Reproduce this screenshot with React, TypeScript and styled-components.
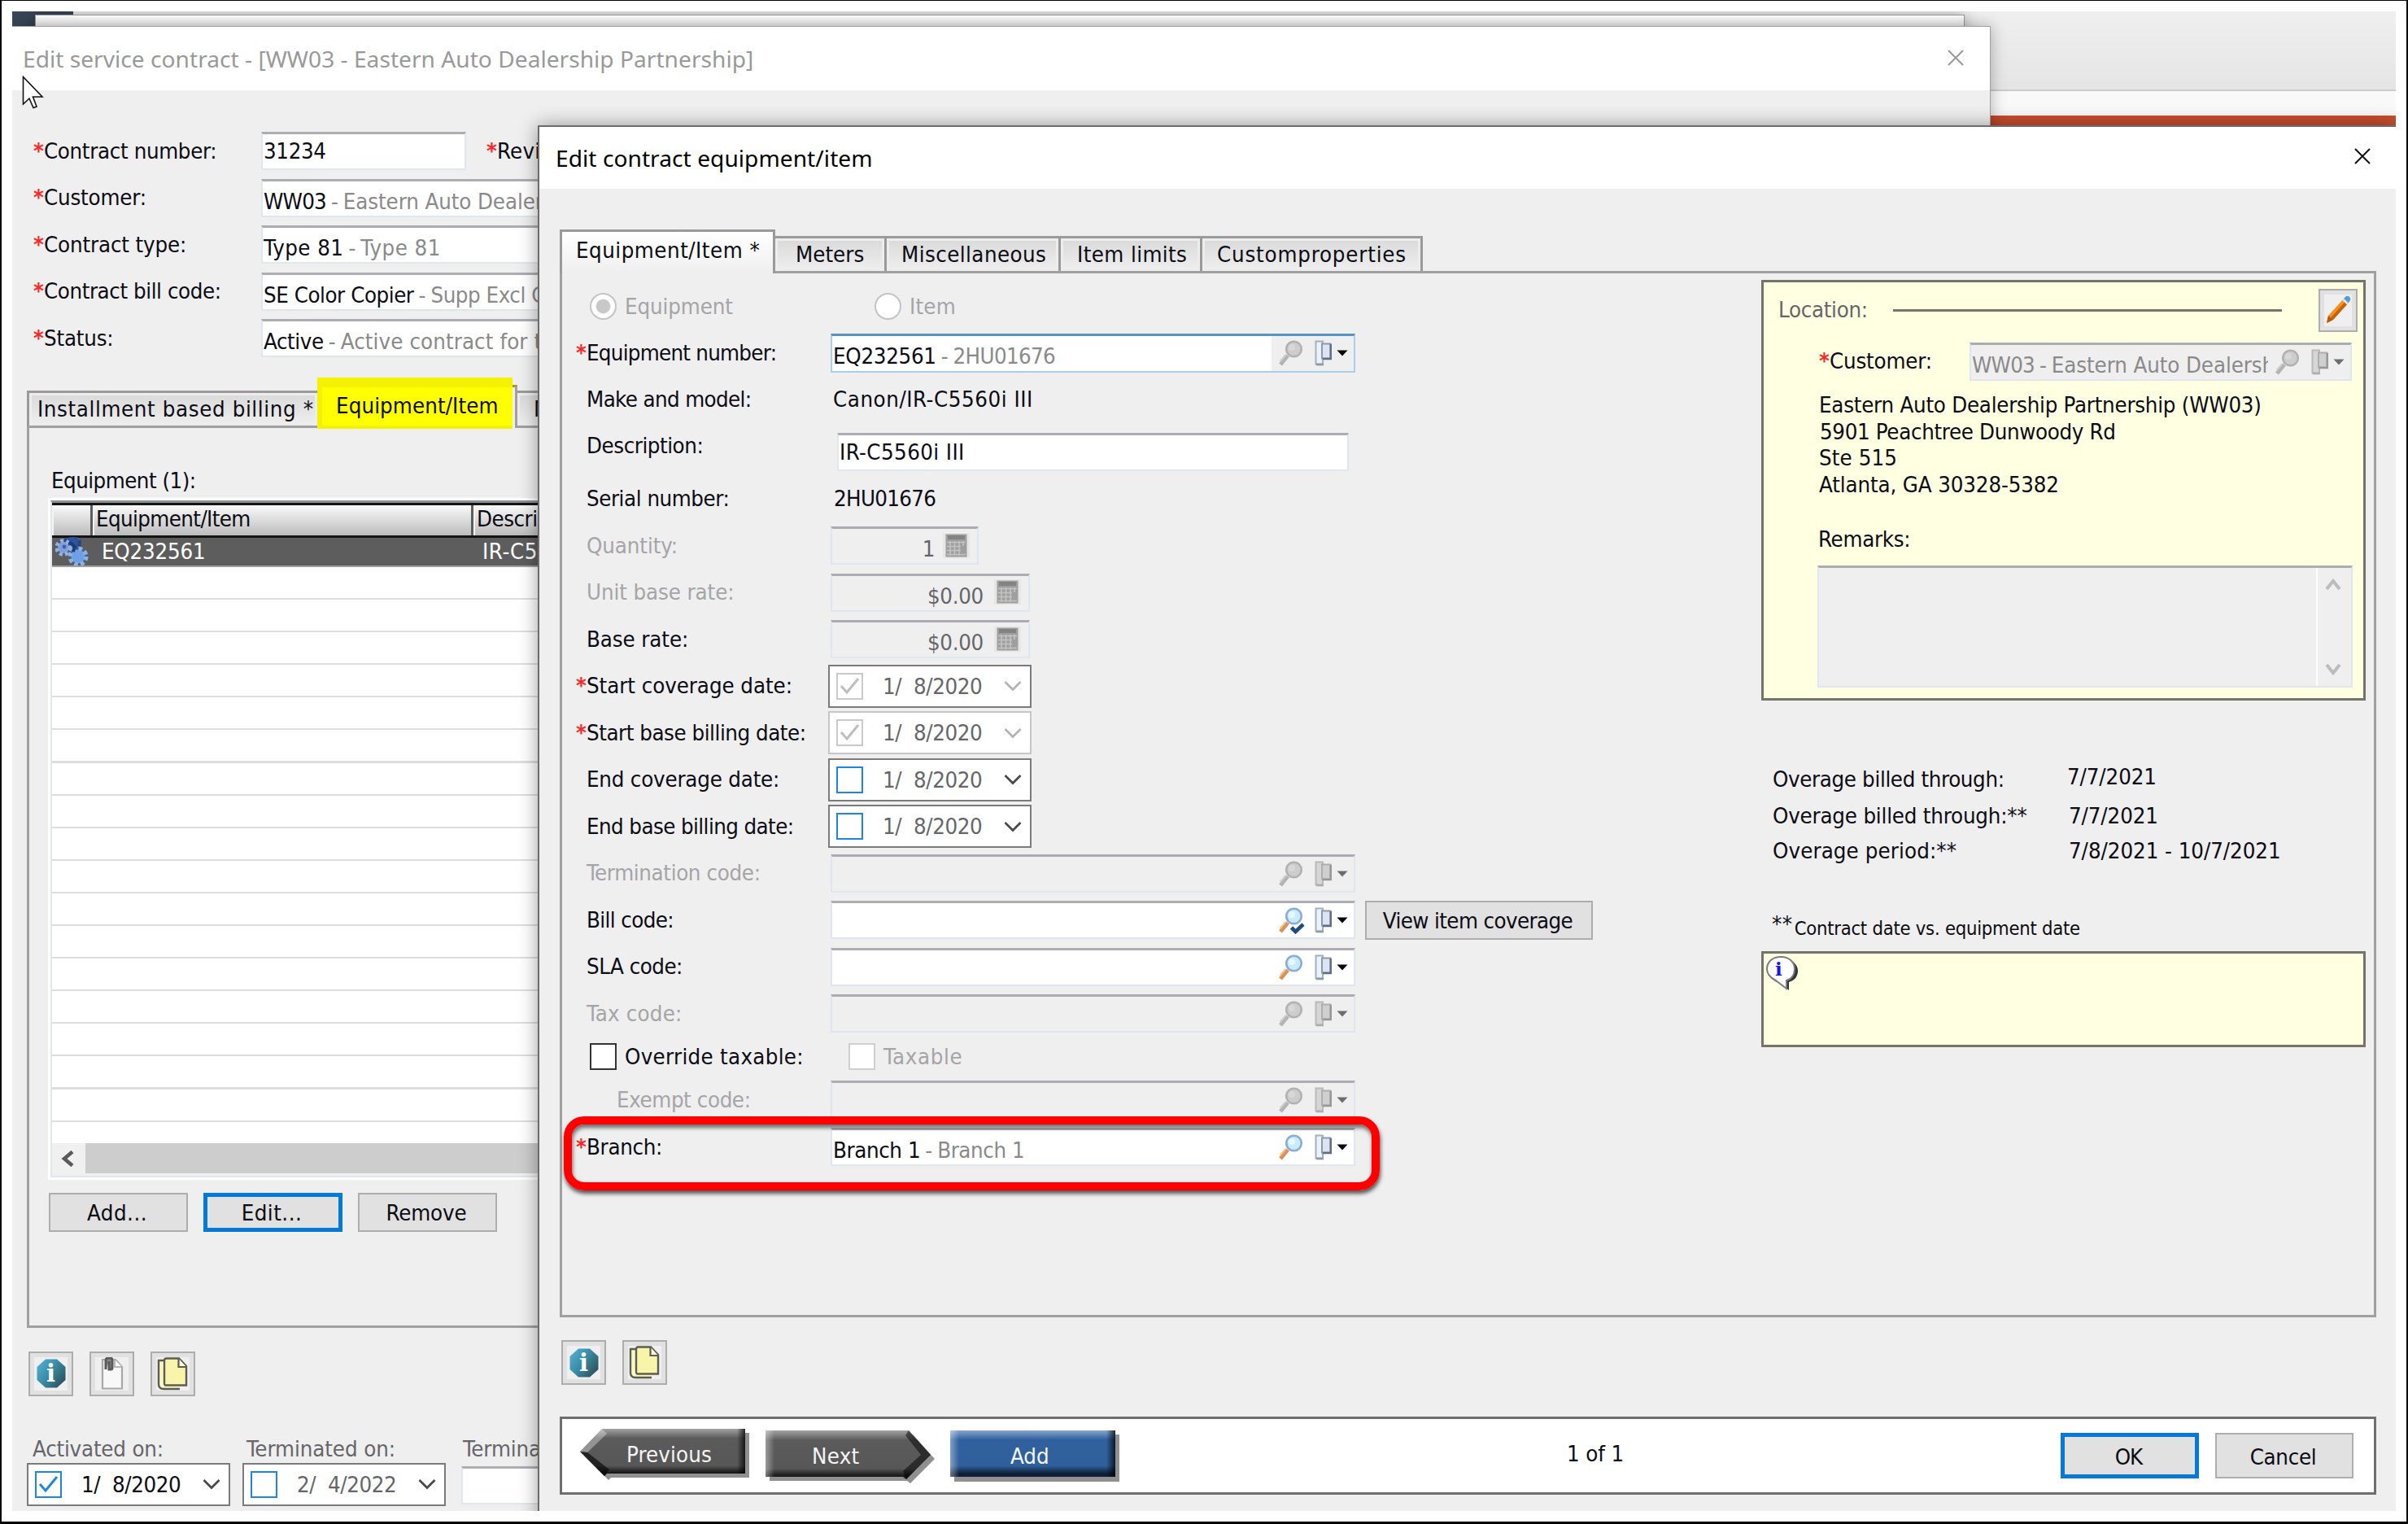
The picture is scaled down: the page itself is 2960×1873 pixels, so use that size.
import React from "react";
import styled, { createGlobalStyle, css } from "styled-components";

const UI = '"DejaVu Sans Condensed", "DejaVu Sans", sans-serif';
const TITLE = '"Noto Sans", "Open Sans", sans-serif';

const GlobalStyle = createGlobalStyle`
  * { box-sizing: border-box; }
  body { margin: 0; background: #fff; }
  button { margin: 0; padding: 0; border-radius: 0; font: inherit; color: inherit; }
  svg { display: block; flex: none; }
`;

/* ---------- desktop and windows ---------- */

const Page = styled.div`
  width: 2960px;
  height: 1873px;
  padding: 13px 13px 13px 13px;
  border: solid #000;
  border-width: 1px 2px 3px 2px;
  background: #fff;
  font-family: ${UI};
  font-size: 27.4px;
  line-height: 32px;
  color: #0c0c10;
  white-space: pre;
`;

const Desktop = styled.div`
  position: relative;
  width: 2930px;
  height: 1843px;
  overflow: hidden;
  background: #333;
`;

const AppRibbon = styled.div`
  height: 96px;
  background: linear-gradient(#efefef, #e5e5e5);
`;
const AppRule = styled.div`
  height: 32px;
  border-top: 2px solid #cbcbcb;
  background: #f9f9f9;
`;
const AppAccent = styled.div`
  height: 14px;
  background: #c94e2f;
`;
const NavyCorner = styled.div`
  position: absolute;
  left: 0;
  top: 0;
  width: 75px;
  height: 20px;
  background: #3a4659;
`;

const BackWindow = styled.section`
  position: absolute;
  left: 28px;
  top: 4px;
  width: 2372px;
  height: 60px;
  border: 1px solid #999;
  background: linear-gradient(#fff, #e4e4e4 16px);
  box-shadow: 0 0 16px rgba(0, 0, 0, 0.3);
`;

const ContractWindow = styled.section`
  position: absolute;
  left: 0;
  top: 18px;
  width: 2432px;
  height: 1900px;
  border: solid #a2a2a2;
  border-width: 1px 1px 0 0;
  background: #efefef;
  box-shadow: 0 0 18px rgba(0, 0, 0, 0.3);
`;

const ItemWindow = styled.section`
  position: absolute;
  left: 646px;
  top: 140px;
  width: 2284px;
  height: 1760px;
  border: solid #6d6b6b;
  border-width: 2px 0 0 2px;
  background: #efefef;
  box-shadow: 0 0 22px rgba(0, 0, 0, 0.38);
`;

const TitleBar = styled.header<{ $h: number; $active?: boolean }>`
  display: flex;
  align-items: center;
  justify-content: space-between;
  height: ${(p) => p.$h}px;
  background: #fff;
  font-family: ${TITLE};
  font-size: 28.1px;
`;

const ContractTitle = styled(TitleBar)`
  padding: 0 32px 0 13px;
  & > svg { margin-bottom: 2px; }
`;
const ItemTitle = styled(TitleBar)`
  padding: 0 31px 0 20px;
  & > svg { margin-bottom: 4px; }
`;
const TitleText = styled.h1<{ $active?: boolean }>`
  margin: 0;
  font: inherit;
  letter-spacing: ${(p) => (p.$active ? 0.06 : 0.03)}px;
  color: ${(p) => (p.$active ? "#000" : "#999")};
`;

const Cursor = styled.svg`
  position: absolute;
  left: 12px;
  top: 79px;
`;

/* ---------- text ---------- */

type Tone = "text" | "muted" | "disabled" | "soft";
const tones: Record<Tone, string> = {
  text: "#0c0c14",
  soft: "#66666a",
  muted: "#8a8a8a",
  disabled: "#a5a5a7",
};

const Txt = styled.span<{ $ls?: number; $tone?: Tone }>`
  letter-spacing: ${(p) => p.$ls ?? -0.3}px;
  color: ${(p) => tones[p.$tone ?? "text"]};
`;

const LabelBox = styled.label<{ $w: number; $indent?: number }>`
  display: flex;
  flex: none;
  width: ${(p) => p.$w}px;
  padding-left: ${(p) => p.$indent ?? 0}px;
`;
const Star = styled.span`
  width: 13px;
  flex: none;
  font-weight: bold;
  color: #fb2828;
`;

function Label({ t, w, ls, req, tone, indent }: {
  t: string; w: number; ls?: number; req?: boolean; tone?: Tone; indent?: number;
}) {
  return (
    <LabelBox $w={w} $indent={indent}>
      <Star>{req ? "*" : ""}</Star>
      <Txt $ls={ls} $tone={tone}>{t}</Txt>
    </LabelBox>
  );
}

/* ---------- controls ---------- */

const fieldFrame = css`
  border: 2px solid #dfe6f0;
  border-top: 3px solid #abadb3;
`;

const Field = styled.div<{ $w: number; $off?: boolean; $focus?: boolean; $dy?: number }>`
  display: flex;
  flex: none;
  align-items: center;
  justify-content: space-between;
  width: ${(p) => p.$w}px;
  height: 47px;
  margin-top: ${(p) => p.$dy ?? 0}px;
  overflow: hidden;
  ${fieldFrame}
  background: ${(p) => (p.$off ? "#efefef" : "#fff")};
  ${(p) => p.$focus && css`
    border: 2px solid #a9cfea;
    border-top: 3px solid #5794bf;
    height: 48px;
  `}
`;

const FieldText = styled.div<{ $drop?: number }>`
  display: flex;
  flex: 1;
  min-width: 0;
  overflow: hidden;
  margin-top: ${(p) => p.$drop ?? 8}px;
  padding-left: 1px;
`;
const Dash = styled.span`
  margin: 0 6px 0 6px;
  color: #8a8a8a;
`;

const LookupButtons = styled.div<{ $shade?: boolean }>`
  display: flex;
  flex: none;
  align-items: center;
  height: 100%;
  padding: 0 7px 0 9px;
  background: ${(p) => (p.$shade ? "#efefef" : "transparent")};
`;
const FolderSlot = styled.span`
  margin: 0 5px 0 12px;
`;

function Magnifier({ off, check }: { off?: boolean; check?: boolean }) {
  return (
    <svg width="32" height="34" viewBox="0 0 32 34">
      <path d="M2 31 L11 20" stroke={off ? "#b4b4b4" : "#d9935a"} strokeWidth="5" />
      <path d="M1.5 27 L8.5 19" stroke={off ? "#cfcfcf" : "#f3c38f"} strokeWidth="2" />
      <circle cx="18.5" cy="12" r="9.3" fill={off ? "#cdcdcd" : "#c9ecfb"} stroke={off ? "#b2b2b2" : "#8aa9dc"} strokeWidth="2.6" />
      <circle cx="16" cy="10" r="4" fill={off ? "#d8d8d8" : "#e6f8ff"} />
      {check && <path d="M15.5 26 L20.5 31 L30 22" fill="none" stroke="#1e4c7d" strokeWidth="4.6" />}
    </svg>
  );
}

function Door({ off }: { off?: boolean }) {
  const edge = off ? "#aeaeae" : "#8e9aa8";
  return (
    <svg width="22" height="32" viewBox="0 0 22 32">
      <path d="M1.5 1.5 H10 V29.5 H1.5 Z" fill={off ? "#d6d6d6" : "#eaf2fb"} stroke={off ? "#b9b9b9" : "#a3b0be"} strokeWidth="2" />
      <path d="M2 30 H11" stroke={edge} strokeWidth="2.6" />
      <path d="M9 4.5 H19.5 V22.5 H9 Z" fill={off ? "#cfcfcf" : "#dbe3f4"} stroke={edge} strokeWidth="2" />
      <path d="M19.8 5 V23 H10" fill="none" stroke={off ? "#989898" : "#5f6f82"} strokeWidth="2.4" />
    </svg>
  );
}

function Caret({ off }: { off?: boolean }) {
  return (
    <svg width="14" height="8" viewBox="0 0 14 8">
      <path d="M0.5 0.5 H13.5 L7 7.5 Z" fill={off ? "#6d6d6d" : "#050505"} />
    </svg>
  );
}

function Lookup({ w, main, desc, off, focus, check, ls, dls, magOff, mainTone }: {
  w: number; main?: string; desc?: string; off?: boolean; focus?: boolean; check?: boolean;
  ls?: number; dls?: number; magOff?: boolean; mainTone?: Tone;
}) {
  return (
    <Field $w={w} $off={off} $focus={focus}>
      <FieldText>
        {main && <Txt $ls={ls} $tone={mainTone}>{main}</Txt>}
        {desc && <><Dash>-</Dash><Txt $ls={dls ?? ls} $tone="muted">{desc}</Txt></>}
      </FieldText>
      <LookupButtons $shade={focus}>
        <Magnifier off={off || magOff} check={check} />
        <FolderSlot><Door off={off} /></FolderSlot>
        <Caret off={off} />
      </LookupButtons>
    </Field>
  );
}

const AmountText = styled(FieldText)<{ $gap: number }>`
  justify-content: flex-end;
  padding-right: ${(p) => p.$gap}px;
`;
const CalcSlot = styled.span`
  margin: -2px 9px 0 0;
  padding: 1px 3px;
  background: #e6e6e6;
`;
function Calculator() {
  return (
    <svg width="27" height="29" viewBox="0 0 27 29">
      <rect x="0.5" y="0.5" width="26" height="28" fill="#9f9f9f" />
      <rect x="3" y="2" width="21" height="5" fill="#838383" />
      <path d="M2 10.5H25M2 15.5H19M2 20.5H19M2 25.5H25M6 9V27M11.5 9V27M17 9V27M22 9V15" stroke="#c3c3c3" strokeWidth="1.6" />
    </svg>
  );
}
function Amount({ w, t, gap = 13 }: { w: number; t: string; gap?: number }) {
  return (
    <Field $w={w} $off>
      <AmountText $gap={gap}><Txt $tone="soft">{t}</Txt></AmountText>
      <CalcSlot><Calculator /></CalcSlot>
    </Field>
  );
}

const Check = styled.span<{ $edge: string }>`
  display: block;
  flex: none;
  width: 33px;
  height: 33px;
  border: 2.6px solid ${(p) => p.$edge};
  background: #fff;
`;

const DateFrame = styled.div<{ $dim?: boolean }>`
  display: flex;
  flex: none;
  align-items: center;
  width: 250px;
  height: 53px;
  padding: 0 10px 0 8px;
  border: 2.5px solid ${(p) => (p.$dim ? "#c6c6c6" : "#7b7b7b")};
  background: #fff;
`;
const DateText = styled.div`
  flex: 1;
  padding: 1px 0 0 24px;
`;

function DateBox({ t, on, off, dim, tone, arrow }: {
  t: [string, string]; on?: boolean; off?: boolean; dim?: boolean; tone?: Tone; arrow?: string;
}) {
  return (
    <DateFrame $dim={dim}>
      <Check $edge={off ? "#c9c9c9" : "#1f86dd"}>
        {on && (
          <svg width="28" height="28" viewBox="0 0 28 28">
            <path d="M4 14 L11 22 L25 5" fill="none" stroke={off ? "#bdbdbd" : "#1f86dd"} strokeWidth="3" />
          </svg>
        )}
      </Check>
      <DateText><Txt $ls={-0.4} $tone={tone ?? "soft"}>{t[0] + "  " + t[1]}</Txt></DateText>
      <svg width="22" height="14" viewBox="0 0 22 14">
        <path d="M1.5 2 L11 11.5 L20.5 2" fill="none" stroke={arrow ?? "#4a4a4a"} strokeWidth="2.8" />
      </svg>
    </DateFrame>
  );
}

const PushButton = styled.button<{ $w: number; $h: number; $primary?: boolean }>`
  flex: none;
  width: ${(p) => p.$w}px;
  height: ${(p) => p.$h}px;
  padding: 3px 3px 0 0;
  border: ${(p) => (p.$primary ? "5px solid #0479d9" : "2px solid #adadad")};
  background: #e1e1e1;
`;

const IconButton = styled.button<{ $w?: number; $h?: number }>`
  display: flex;
  flex: none;
  align-items: center;
  justify-content: center;
  width: ${(p) => p.$w ?? 55}px;
  height: ${(p) => p.$h ?? 55}px;
  border: 2px solid #adadad;
  background: #efefef;
  box-shadow: inset 0 0 0 5px #e1e1e1;
`;

const InfoGlyph = styled.span`
  display: grid;
  place-items: center;
  & > * { grid-area: 1 / 1; }
`;
const InfoLetter = styled.b`
  position: relative;
  font: bold 29px/36px "DejaVu Serif", serif;
  color: #fff;
`;
function InfoIcon() {
  return (
    <InfoGlyph>
      <svg width="36" height="36" viewBox="0 0 36 36">
        <defs>
          <linearGradient id="teal" x1="0" y1="0" x2="1" y2="0.7">
            <stop offset="0" stopColor="#56b4d6" />
            <stop offset="0.5" stopColor="#3a8ea8" />
            <stop offset="1" stopColor="#2f5560" />
          </linearGradient>
        </defs>
        <path d="M11 0.5 H25 L35.5 10 V26 L25 35.5 H11 L0.5 26 V10 Z" fill="url(#teal)" />
      </svg>
      <InfoLetter>i</InfoLetter>
    </InfoGlyph>
  );
}
function NotesIcon() {
  return (
    <svg width="39" height="41" viewBox="0 0 39 41">
      <path d="M8 4 H2 V33 Q2 39 8 39 H28" fill="#fbf8c8" stroke="#5c5c50" strokeWidth="2.4" />
      <path d="M11 1.5 H27 L36 11 V34.500 H10 Q9 34 9 32 V4 Q9 2 11 1.500 Z" fill="#f8f5ab" stroke="#5c5c50" strokeWidth="2.4" />
      <path d="M26.500 1.500 V12 H36" fill="#fdfce0" stroke="#5c5c50" strokeWidth="2.2" />
    </svg>
  );
}
function ClipIcon() {
  return (
    <svg width="28" height="40" viewBox="0 0 28 40">
      <path d="M2 3 H18 L26 12 V38.500 H2 Z" fill="#f8f8f8" stroke="#a8a8a8" strokeWidth="2.2" />
      <path d="M17 3 V12 H26" fill="#fff" stroke="#b5b5b5" strokeWidth="2" />
      <path d="M6 15 V4 Q6 1 9 1 H12 Q14 1 14 4 V13 Q14 15 12 15 H10 V5" fill="#8a8a8a" stroke="#5b5b5b" strokeWidth="3" />
    </svg>
  );
}
function PencilIcon() {
  return (
    <svg width="32" height="36" viewBox="0 0 32 36">
      <path d="M2 34 L4 25 L23 4 L29 9 L10 30 Z" fill="#f2921d" />
      <path d="M10 30 L29 9 L26 6.500 L7 27.500 Z" fill="#c4640c" />
      <path d="M2 34 L4 25 L10 30 Z" fill="#b4580a" />
      <path d="M23 4 L26 1 Q29 0 31 3 Q32 5 29 9 Z" fill="#4f9ed8" />
      <path d="M22 5 L28 10.500" stroke="#dfe7ee" strokeWidth="2.6" />
    </svg>
  );
}
function GearsIcon() {
  return (
    <svg width="41" height="35" viewBox="0 0 41 35">
      <circle cx="21" cy="7.500" r="8" fill="#2f549c" />
      <circle cx="21" cy="7.500" r="9" fill="none" stroke="#24468c" strokeWidth="4" strokeDasharray="4 3.500" />
      <circle cx="10" cy="13" r="7" fill="#7f9fd8" />
      <circle cx="10" cy="13" r="8.500" fill="none" stroke="#93b2e6" strokeWidth="4.500" strokeDasharray="4 3.200" />
      <circle cx="28" cy="24" r="8.500" fill="#6fa0e6" />
      <circle cx="28" cy="24" r="10" fill="none" stroke="#86b2f0" strokeWidth="5" strokeDasharray="4.600 3.300" />
      <path d="M17 6 L24 12 L22 18" fill="none" stroke="#1f3b78" strokeWidth="4" />
      <circle cx="11" cy="12" r="2.400" fill="#3d62ad" />
    </svg>
  );
}
function CloseIcon({ color }: { color: string }) {
  return (
    <svg width="20" height="20" viewBox="0 0 20 20">
      <path d="M1 1 L19 19 M19 1 L1 19" stroke={color} strokeWidth="2" />
    </svg>
  );
}

/* ---------- tabs ---------- */

const TabStrip = styled.nav<{ $h: number }>`
  display: flex;
  align-items: flex-end;
  height: ${(p) => p.$h}px;
`;
const Tab = styled.div<{ $w: number; $pad: number; $active?: boolean }>`
  position: relative;
  flex: none;
  width: ${(p) => p.$w}px;
  height: ${(p) => (p.$active ? "calc(100% + 3px)" : "43px")};
  margin-bottom: ${(p) => (p.$active ? -3 : 0)}px;
  z-index: ${(p) => (p.$active ? 1 : 0)};
  padding: ${(p) => (p.$active ? 7 : 4)}px 0 0 ${(p) => p.$pad}px;
  border: solid #9a9a9a;
  border-width: 3px 3px 0 ${(p) => (p.$active ? 3 : 0)}px;
  background: ${(p) => (p.$active ? "linear-gradient(#fff, #efefef)" : "linear-gradient(#d9d9d9, #efefef)")};
  box-shadow: ${(p) => (p.$active ? "none" : "inset 0 0 0 3px #ededed")};
`;
const FirstTab = styled(Tab)`
  border-left-width: 3px;
`;
const MarkedTab = styled(Tab)`
  height: 53px;
  background: linear-gradient(to right, #ff0 calc(100% - 4px), #efefef 0);
  border-color: #a0a000;
  border-right-color: #a0a0a0;
  box-shadow: none;
  &::before {
    content: "";
    position: absolute;
    left: -6px;
    right: 3px;
    top: -12px;
    height: 63px;
    z-index: -1;
    background: #f4f200;
  }
`;
const MarkFill = styled.div`
  position: absolute;
  inset: 0 3px 3px 0;
  z-index: -1;
  background: #ff0;
`;

/* ---------- contract window ---------- */

const ContractForm = styled.div`
  display: flex;
  flex-direction: column;
  width: 646px;
  padding: 46px 0 0 26px;
  overflow: hidden;
`;
const FormRow = styled.div<{ $h?: number; $gap?: number }>`
  display: flex;
  align-items: center;
  height: ${(p) => p.$h ?? 57.5}px;
  margin-top: ${(p) => p.$gap ?? 0}px;
`;
const ContractTabs = styled.div`
  margin: 28px 20px 0 18px;
`;
const ContractPanel = styled.div`
  height: 1109px;
  padding: 49px 0 0 23px;
  border: 3px solid #a0a0a0;
`;
const ListTitle = styled.div`
  padding-left: 4px;
  height: 37px;
`;
const Grid = styled.div`
  width: 2200px;
  height: 838px;
  border: 3px solid #fff;
`;
const GridInner = styled.div`
  display: flex;
  flex-direction: column;
  height: 832px;
  border: 2px solid #dfe6f0;
  border-top: 3px solid #8c8f96;
  background: #fff;
`;
const HeaderRow = styled.div`
  display: flex;
  flex: none;
  height: 43px;
  border: solid #141414;
  border-width: 3px 0;
  background: linear-gradient(#fafafa, #bcbcbc);
`;
const HeaderCell = styled.div<{ $w: number }>`
  width: ${(p) => p.$w}px;
  padding: 1px 0 0 4px;
  border-right: 3px solid #5e5e5e;
  box-shadow: inset 2px 0 0 #f4f4f4;
`;
const SelectedRow = styled.div`
  display: flex;
  flex: none;
  align-items: center;
  height: 36px;
  padding-left: 4px;
  border-bottom: 2px solid #a0a0a0;
  background: #5d5d5d;
`;
const RowCell = styled.div<{ $w: number; $pad: number; $ls?: number }>`
  width: ${(p) => p.$w}px;
  padding-left: ${(p) => p.$pad}px;
  letter-spacing: ${(p) => p.$ls ?? -0.2}px;
  color: #fff;
`;
const GridLines = styled.div`
  flex: 1;
  background: repeating-linear-gradient(#fff 0 38px, #dedede 38px 40.1px);
`;
const ScrollBar = styled.div`
  display: flex;
  align-items: flex-start;
  flex: none;
  height: 40px;
  background: #f0f0f0;
`;
const ScrollThumb = styled.div`
  flex: 1;
  height: 37px;
  margin-left: 14px;
  background: #cdcdcd;
`;
const ArrowSlot = styled.span`
  margin: 9px 0 0 11px;
`;
const ListButtons = styled.div`
  display: flex;
  gap: 19px;
  padding: 16px 0 0 1px;
`;
const IconRow = styled.div<{ $top: number; $left: number; $gap: number }>`
  display: flex;
  gap: ${(p) => p.$gap}px;
  padding: ${(p) => p.$top}px 0 0 ${(p) => p.$left}px;
`;
const ContractFooter = styled.div`
  display: flex;
  padding: 49px 0 0 18px;
`;
const FooterItem = styled.div<{ $w: number; $pad: number }>`
  display: flex;
  flex-direction: column;
  flex: none;
  width: ${(p) => p.$w}px;
  & > span { padding-left: ${(p) => p.$pad}px; height: 33px; }
`;
const PlainField = styled(Field)`
  margin-top: 4px;
`;

/* ---------- item window ---------- */

const ItemTabs = styled.div`
  margin: 50px 24px 0 25px;
`;
const ItemPanel = styled.div`
  display: flex;
  align-items: flex-start;
  height: 1286px;
  padding: 8px 10px 0 17px;
  border: 3px solid #a0a0a0;
`;
const ItemForm = styled.div`
  flex: 1;
  min-width: 0;
  padding-top: 4px;
`;
const Radio = styled.span<{ $on?: boolean }>`
  flex: none;
  width: 33px;
  height: 33px;
  border: 2.5px solid #c4c4c4;
  border-radius: 50%;
  background: ${(p) => (p.$on ? "radial-gradient(#c8c8c8 0 8px, #fff 9.5px)" : "#fff")};
`;
const RadioGroup = styled.div<{ $w: number }>`
  display: flex;
  align-items: center;
  gap: 10px;
  width: ${(p) => p.$w}px;
`;
const RadioRow = styled(FormRow)`
  padding-left: 17px;
`;
const CoverageSlot = styled.div`
  margin-left: 12px;
`;
const CheckGroup = styled.div<{ $w: number; $gap: number }>`
  display: flex;
  align-items: center;
  gap: ${(p) => p.$gap}px;
  width: ${(p) => p.$w}px;
`;
const BranchMark = styled.div`
  position: absolute;
  left: 30px;
  top: 1216px;
  width: 1003px;
  height: 91px;
  border: 10px solid #f00;
  border-radius: 25px;
  box-shadow: 1px 4px 5px rgba(0, 0, 0, 0.65), inset 1px 4px 5px rgba(0, 0, 0, 0.55);
`;

const SideColumn = styled.div`
  flex: none;
  width: 743px;
`;
const NoteBox = styled.div<{ $h: number }>`
  height: ${(p) => p.$h}px;
  border: 3px solid #74746a;
  background: #ffffe1;
`;
const LocationHead = styled.div`
  display: flex;
  align-items: center;
  height: 70px;
  padding: 0 7px 2px 18px;
`;
const LocationRule = styled.div`
  flex: 1;
  height: 3px;
  margin: 0 45px 0 31px;
  background: #75756c;
`;
const LocationBody = styled.div`
  padding-left: 66px;
`;
const AddressLine = styled.div<{ $gap?: number; $pad?: number }>`
  height: 32.5px;
  margin-top: ${(p) => p.$gap ?? 0}px;
  padding-left: ${(p) => p.$pad ?? 2}px;
`;
const Remarks = styled.div`
  display: flex;
  justify-content: flex-end;
  width: 658px;
  height: 150px;
  margin-top: 15px;
  ${fieldFrame}
  background: #efefef;
`;
const RemarksScroll = styled.div`
  display: flex;
  flex-direction: column;
  justify-content: space-between;
  width: 43px;
  padding: 13px 0 13px 9px;
  border-left: 2.500px solid #fdfdfd;
`;
const OverageRow = styled.div<{ $h: number }>`
  display: flex;
  align-items: center;
  height: ${(p) => p.$h}px;
  padding-left: 14px;
`;
const OverageLabel = styled.div`
  width: 362px;
`;
const OverageValue = styled.div<{ $up?: number; $in?: number }>`
  margin: ${(p) => -(p.$up ?? 0)}px 0 0 ${(p) => p.$in ?? 2}px;
`;
const Overage = styled.div`
  padding-top: 74px;
`;
const Footnote = styled.div`
  display: flex;
  height: 49px;
  margin: 54px 0 0 13px;
`;
const FootnoteText = styled.span`
  margin-left: 2px;
  padding-top: 5px;
  font-size: 23.6px;
  letter-spacing: -0.25px;
`;
const Bubble = styled.div`
  display: grid;
  width: 42px;
  margin: 3px 0 0 2px;
  & > * { grid-area: 1 / 1; }
`;
const BubbleLetter = styled.b`
  position: relative;
  padding-left: 12px;
  font: bold 23px/31px "DejaVu Serif", serif;
  color: #1414f0;
`;

const NavBar = styled.footer`
  display: flex;
  align-items: flex-start;
  height: 96px;
  margin: 39px 24px 0 25px;
  padding-left: 22px;
  border: 3px solid #6f6f6f;
  background: #fff;
`;
const ShapeButton = styled.button<{ $left?: number; $top: number; $tx: number }>`
  display: grid;
  flex: none;
  width: 208px;
  height: 64px;
  margin: ${(p) => p.$top}px 0 0 ${(p) => p.$left ?? 0}px;
  border: 0;
  background: none;
  text-align: left;
  & > * { grid-area: 1 / 1; }
  & > span {
    position: relative;
    padding: 16px 0 0 ${(p) => p.$tx}px;
    color: #f4f4f4;
  }
`;
const Counter = styled.div`
  flex: 1;
  padding: 27px 0 0 550px;
`;
const EndButtons = styled.div`
  display: flex;
  gap: 20px;
  margin: 17px 25px 0 0;
`;

function BevelDefs() {
  return (
    <defs>
      <linearGradient id="grey" x1="0" y1="0" x2="0" y2="1">
        <stop offset="0" stopColor="#a2a2a2" />
        <stop offset="0.2" stopColor="#5b5b5b" />
        <stop offset="0.78" stopColor="#575757" />
        <stop offset="0.92" stopColor="#1c1c1c" />
        <stop offset="1" stopColor="#141414" />
      </linearGradient>
      <linearGradient id="blue" x1="0" y1="0" x2="0" y2="1">
        <stop offset="0" stopColor="#86a6cd" />
        <stop offset="0.2" stopColor="#30619e" />
        <stop offset="0.76" stopColor="#30609b" />
        <stop offset="0.93" stopColor="#0e1f38" />
        <stop offset="1" stopColor="#0e1f38" />
      </linearGradient>
      <linearGradient id="lit" x1="0" y1="0" x2="1" y2="0">
        <stop offset="0" stopColor="#fff" stopOpacity="0.4" />
        <stop offset="1" stopColor="#fff" stopOpacity="0" />
      </linearGradient>
      <linearGradient id="shade" x1="0" y1="0" x2="1" y2="0">
        <stop offset="0" stopColor="#000" stopOpacity="0" />
        <stop offset="1" stopColor="#000" stopOpacity="0.75" />
      </linearGradient>
    </defs>
  );
}
function PreviousShape() {
  const d = "M0 28 L27 0 H203 V55 H33 L30 58 Z";
  return (
    <svg width="208" height="64" viewBox="0 0 208 64">
      <BevelDefs />
      <path d={d} transform="translate(5 5)" fill="#909090" />
      <path d={d} fill="url(#grey)" />
      <path d="M0 28 L27 0 L33 6 L9 29 Z" fill="#fff" opacity="0.35" />
      <path d="M0 28 L9 29 L36 50 L30 58 Z" fill="#000" opacity="0.6" />
      <rect x="193" width="10" height="55" fill="url(#shade)" />
    </svg>
  );
}
function NextShape() {
  const d = "M0 0 H176 L203 30 L173 60 L169 57 H0 Z";
  return (
    <svg width="208" height="66" viewBox="0 0 208 66">
      <path d={d} transform="translate(5 5)" fill="#909090" />
      <path d={d} fill="url(#grey)" />
      <rect width="11" height="57" fill="url(#lit)" />
      <path d="M176 0 L203 30 L173 60 L169 50 L191 30 L172 6 Z" fill="#000" opacity="0.5" />
    </svg>
  );
}
function AddShape() {
  return (
    <svg width="208" height="64" viewBox="0 0 208 64">
      <rect x="5" y="5" width="203" height="58" fill="#909090" />
      <rect width="203" height="57" fill="url(#blue)" />
      <rect width="11" height="57" fill="url(#lit)" />
      <rect x="192" width="11" height="57" fill="url(#shade)" />
    </svg>
  );
}

function ContractPane() {
  return (
    <ContractWindow>
      <ContractTitle $h={78}>
        <TitleText>Edit service contract - [WW03 - Eastern Auto Dealership Partnership]</TitleText>
        <CloseIcon color="#999" />
      </ContractTitle>
      <ContractForm>
        <FormRow>
          <Label w={280} req t="Contract number:" ls={-0.35} />
          <Field $w={252}><FieldText $drop={0}><Txt $ls={-0.34}>31234</Txt></FieldText></Field>
          <LabelBox $w={200} $indent={25}><Star>*</Star><Txt $ls={0.2}>Revi</Txt></LabelBox>
        </FormRow>
        <FormRow>
          <Label w={280} req t="Customer:" ls={-0.19} />
          <Lookup w={900} main="WW03" ls={-0.8} desc="Eastern Auto Dealer" dls={-0.1} />
        </FormRow>
        <FormRow>
          <Label w={280} req t="Contract type:" ls={-0.15} />
          <Lookup w={900} main="Type 81" desc="Type 81" ls={0.44} />
        </FormRow>
        <FormRow>
          <Label w={280} req t="Contract bill code:" ls={-0.42} />
          <Lookup w={900} main="SE Color Copier" desc="Supp Excl C" ls={-0.45} />
        </FormRow>
        <FormRow>
          <Label w={280} req t="Status:" ls={-0.2} />
          <Lookup w={900} main="Active" desc="Active contract for t" ls={-0.4} dls={0.1} />
        </FormRow>
      </ContractForm>
      <ContractTabs>
        <TabStrip $h={50}>
          <FirstTab $w={360} $pad={10}><Txt $ls={0.61}>Installment based billing *</Txt></FirstTab>
          <MarkedTab $w={243} $pad={17} $active><MarkFill /><Txt $ls={0.1}>Equipment/Item</Txt></MarkedTab>
          <Tab $w={150} $pad={20}><Txt>M</Txt></Tab>
        </TabStrip>
        <ContractPanel>
          <ListTitle><Txt $ls={-0.52}>Equipment (1):</Txt></ListTitle>
          <Grid>
            <GridInner>
              <HeaderRow>
                <HeaderCell $w={50} />
                <HeaderCell $w={468}><Txt $ls={-0.6}>Equipment/Item</Txt></HeaderCell>
                <HeaderCell $w={600}><Txt $ls={-0.5}>Descrip</Txt></HeaderCell>
              </HeaderRow>
              <SelectedRow>
                <GearsIcon />
                <RowCell $w={467} $pad={16}>EQ232561</RowCell>
                <RowCell $w={400} $pad={17} $ls={0.6}>IR-C5</RowCell>
              </SelectedRow>
              <GridLines />
              <ScrollBar>
                <ArrowSlot>
                  <svg width="16" height="20" viewBox="0 0 16 20">
                    <path d="M14 1.500 L4 10 L14 18.500" fill="none" stroke="#5a5a5a" strokeWidth="4.500" />
                  </svg>
                </ArrowSlot>
                <ScrollThumb />
              </ScrollBar>
            </GridInner>
          </Grid>
          <ListButtons>
            <PushButton $w={171} $h={48}><Txt $ls={0.5}>Add...</Txt></PushButton>
            <PushButton $w={171} $h={48} $primary><Txt $ls={0.5}>Edit...</Txt></PushButton>
            <PushButton $w={171} $h={48}><Txt $ls={-0.18}>Remove</Txt></PushButton>
          </ListButtons>
        </ContractPanel>
      </ContractTabs>
      <IconRow $top={29} $left={20} $gap={20}>
        <IconButton><InfoIcon /></IconButton>
        <IconButton><ClipIcon /></IconButton>
        <IconButton><NotesIcon /></IconButton>
      </IconRow>
      <ContractFooter>
        <FooterItem $w={265} $pad={7}>
          <Txt $ls={-0.2} $tone="soft">Activated on:</Txt>
          <DateBox t={["1/", "8/2020"]} on tone="text" />
        </FooterItem>
        <FooterItem $w={269} $pad={5}>
          <Txt $ls={-0.08} $tone="soft">Terminated on:</Txt>
          <DateBox t={["2/", "4/2022"]} />
        </FooterItem>
        <FooterItem $w={300} $pad={2}>
          <Txt $ls={-0.1} $tone="soft">Termina</Txt>
          <PlainField $w={300} />
        </FooterItem>
      </ContractFooter>
    </ContractWindow>
  );
}

const L = 313;

function ItemFormRows() {
  return (
    <ItemForm>
      <RadioRow $h={57}>
        <RadioGroup $w={350}><Radio $on /><Txt $tone="disabled" $ls={-0.1}>Equipment</Txt></RadioGroup>
        <RadioGroup $w={200}><Radio /><Txt $tone="disabled" $ls={0.2}>Item</Txt></RadioGroup>
      </RadioRow>
      <FormRow $h={57}>
        <Label w={L} req t="Equipment number:" ls={-0.73} />
        <Lookup w={645} main="EQ232561" desc="2HU01676" ls={-0.29} dls={-0.66} focus magOff />
      </FormRow>
      <FormRow $h={57.5}>
        <Label w={L + 3} t="Make and model:" ls={-0.63} />
        <Txt $ls={0.55}>Canon/IR-C5560i III</Txt>
      </FormRow>
      <FormRow $h={57}>
        <Label w={L + 8} t="Description:" ls={-0.45} />
        <Field $w={629} $dy={14}><FieldText $drop={0}><Txt $ls={0.4}>IR-C5560i III</Txt></FieldText></Field>
      </FormRow>
      <FormRow $gap={8}>
        <Label w={L + 4} t="Serial number:" ls={-0.45} />
        <Txt $ls={-0.66}>2HU01676</Txt>
      </FormRow>
      <FormRow>
        <Label w={L} t="Quantity:" ls={-0.1} tone="disabled" />
        <Amount w={182} t="1" gap={10} />
      </FormRow>
      <FormRow>
        <Label w={L} t="Unit base rate:" ls={-0.1} tone="disabled" />
        <Amount w={245} t="$0.00" />
      </FormRow>
      <FormRow>
        <Label w={L} t="Base rate:" ls={-0.1} />
        <Amount w={245} t="$0.00" />
      </FormRow>
      <FormRow>
        <Label w={L - 3} req t="Start coverage date:" ls={-0.06} />
        <DateBox t={["1/", "8/2020"]} on off arrow="#b4b4b4" />
      </FormRow>
      <FormRow>
        <Label w={L - 3} req t="Start base billing date:" ls={-0.46} />
        <DateBox t={["1/", "8/2020"]} on off dim arrow="#b4b4b4" />
      </FormRow>
      <FormRow>
        <Label w={L - 3} t="End coverage date:" ls={-0.2} />
        <DateBox t={["1/", "8/2020"]} />
      </FormRow>
      <FormRow>
        <Label w={L - 3} t="End base billing date:" ls={-0.58} />
        <DateBox t={["1/", "8/2020"]} />
      </FormRow>
      <FormRow>
        <Label w={L} t="Termination code:" ls={-0.35} tone="disabled" />
        <Lookup w={645} off />
      </FormRow>
      <FormRow>
        <Label w={L} t="Bill code:" ls={-0.6} />
        <Lookup w={645} check />
        <CoverageSlot><PushButton $w={280} $h={48}><Txt $ls={-0.6}>View item coverage</Txt></PushButton></CoverageSlot>
      </FormRow>
      <FormRow>
        <Label w={L} t="SLA code:" ls={-0.5} />
        <Lookup w={645} />
      </FormRow>
      <FormRow>
        <Label w={L} t="Tax code:" ls={0.2} tone="disabled" />
        <Lookup w={645} off />
      </FormRow>
      <RadioRow $h={48}>
        <CheckGroup $w={318} $gap={10}><Check $edge="#333" /><Txt $ls={0.3}>Override taxable:</Txt></CheckGroup>
        <CheckGroup $w={200} $gap={10}><Check $edge="#cfcfcf" /><Txt $ls={0.6} $tone="disabled">Taxable</Txt></CheckGroup>
      </RadioRow>
      <FormRow $h={58}>
        <Label w={L} indent={37} t="Exempt code:" ls={-0.4} tone="disabled" />
        <Lookup w={645} off />
      </FormRow>
      <FormRow $h={58}>
        <Label w={L} req t="Branch:" ls={-0.3} />
        <Lookup w={645} main="Branch 1" desc="Branch 1" ls={-0.4} />
      </FormRow>
    </ItemForm>
  );
}

function SidePane() {
  return (
    <SideColumn>
      <NoteBox $h={517}>
        <LocationHead>
          <Txt $tone="soft" $ls={-0.3}>Location:</Txt>
          <LocationRule />
          <IconButton $w={48} $h={53}><PencilIcon /></IconButton>
        </LocationHead>
        <LocationBody>
          <FormRow $h={54}>
            <Label w={187} req t="Customer:" ls={-0.19} indent={2} />
            <Lookup w={470} main="WW03" mainTone="muted" desc="Eastern Auto Dealersh" ls={-0.8} dls={-0.1} off />
          </FormRow>
          <AddressLine $gap={11}><Txt $ls={-0.25}>Eastern Auto Dealership Partnership (WW03)</Txt></AddressLine>
          <AddressLine $pad={3}><Txt $ls={-0.34}>5901 Peachtree Dunwoody Rd</Txt></AddressLine>
          <AddressLine><Txt $ls={0.1}>Ste 515</Txt></AddressLine>
          <AddressLine><Txt $ls={-0.13}>Atlanta, GA 30328-5382</Txt></AddressLine>
          <AddressLine $gap={35} $pad={1}><Txt $ls={-0.3}>Remarks:</Txt></AddressLine>
          <Remarks>
            <RemarksScroll>
              <svg width="20" height="15" viewBox="0 0 20 15"><path d="M2 13 L10 3 L18 13" fill="none" stroke="#bcbcbc" strokeWidth="4" /></svg>
              <svg width="20" height="15" viewBox="0 0 20 15"><path d="M2 2 L10 12 L18 2" fill="none" stroke="#bcbcbc" strokeWidth="4" /></svg>
            </RemarksScroll>
          </Remarks>
        </LocationBody>
      </NoteBox>
      <Overage>
        <OverageRow $h={45}>
          <OverageLabel><Txt $ls={-0.36}>Overage billed through:</Txt></OverageLabel>
          <OverageValue $up={6} $in={0}><Txt $ls={-0.1}>7/7/2021</Txt></OverageValue>
        </OverageRow>
        <OverageRow $h={45}>
          <OverageLabel><Txt $ls={-0.2}>Overage billed through:**</Txt></OverageLabel>
          <OverageValue><Txt $ls={-0.1}>7/7/2021</Txt></OverageValue>
        </OverageRow>
        <OverageRow $h={41}>
          <OverageLabel><Txt $ls={0.1}>Overage period:**</Txt></OverageLabel>
          <OverageValue><Txt $ls={-0.05}>7/8/2021 - 10/7/2021</Txt></OverageValue>
        </OverageRow>
      </Overage>
      <Footnote><Txt $ls={0.5}>**</Txt><FootnoteText>Contract date vs. equipment date</FootnoteText></Footnote>
      <NoteBox $h={118}>
        <Bubble>
          <svg width="42" height="42" viewBox="0 0 42 42">
            <path d="M21 3 C10 3 4 10 4 18 C4 27 11 31 21 35 L29 42 V32 C36 30 40 25 40 18 C40 10 32 3 21 3 Z" fill="#333" />
            <path d="M19 1 C8 1 2 8 2 16 C2 23 7 27 13 30 L26 40 V30 C33 28 36 22 36 16 C36 8 30 1 19 1 Z" fill="#fff" stroke="#7c7c7c" strokeWidth="2" />
          </svg>
          <BubbleLetter>i</BubbleLetter>
        </Bubble>
      </NoteBox>
    </SideColumn>
  );
}

function ItemPane() {
  return (
    <ItemWindow>
      <ItemTitle $h={76}>
        <TitleText $active>Edit contract equipment/item</TitleText>
        <CloseIcon color="#111" />
      </ItemTitle>
      <ItemTabs>
        <TabStrip $h={51}>
          <Tab $w={265} $pad={17} $active><Txt $ls={0.5}>Equipment/Item *</Txt></Tab>
          <Tab $w={137} $pad={25}><Txt $ls={0}>Meters</Txt></Tab>
          <Tab $w={214} $pad={18}><Txt $ls={0.43}>Miscellaneous</Txt></Tab>
          <Tab $w={174} $pad={20}><Txt $ls={0.4}>Item limits</Txt></Tab>
          <Tab $w={271} $pad={18}><Txt $ls={0.8}>Customproperties</Txt></Tab>
        </TabStrip>
        <ItemPanel>
          <ItemFormRows />
          <SidePane />
        </ItemPanel>
      </ItemTabs>
      <IconRow $top={28} $left={27} $gap={20}>
        <IconButton><InfoIcon /></IconButton>
        <IconButton><NotesIcon /></IconButton>
      </IconRow>
      <NavBar>
        <ShapeButton $top={12} $tx={57}><PreviousShape /><Txt $ls={0.1}>Previous</Txt></ShapeButton>
        <ShapeButton $top={14} $left={20} $tx={57}><NextShape /><Txt $ls={0.3}>Next</Txt></ShapeButton>
        <ShapeButton $top={14} $left={19} $tx={74}><AddShape /><Txt $ls={0}>Add</Txt></ShapeButton>
        <Counter><Txt $ls={-0.1}>1 of 1</Txt></Counter>
        <EndButtons>
          <PushButton $w={170} $h={56} $primary><Txt $ls={-1}>OK</Txt></PushButton>
          <PushButton $w={170} $h={56}><Txt>Cancel</Txt></PushButton>
        </EndButtons>
      </NavBar>
      <BranchMark />
    </ItemWindow>
  );
}

export default function App() {
  return (
    <>
      <GlobalStyle />
      <Page>
        <Desktop>
          <AppRibbon />
          <AppRule />
          <AppAccent />
          <NavyCorner />
          <BackWindow />
          <ContractPane />
          <Cursor width="28" height="42" viewBox="0 0 28 42">
            <path d="M1.500 1.500 V35 L9 28 L14 39.500 L18 38 L13.500 26 H25 Z" fill="#fff" stroke="#111" strokeWidth="1.600" />
          </Cursor>
          <ItemPane />
        </Desktop>
      </Page>
    </>
  );
}
